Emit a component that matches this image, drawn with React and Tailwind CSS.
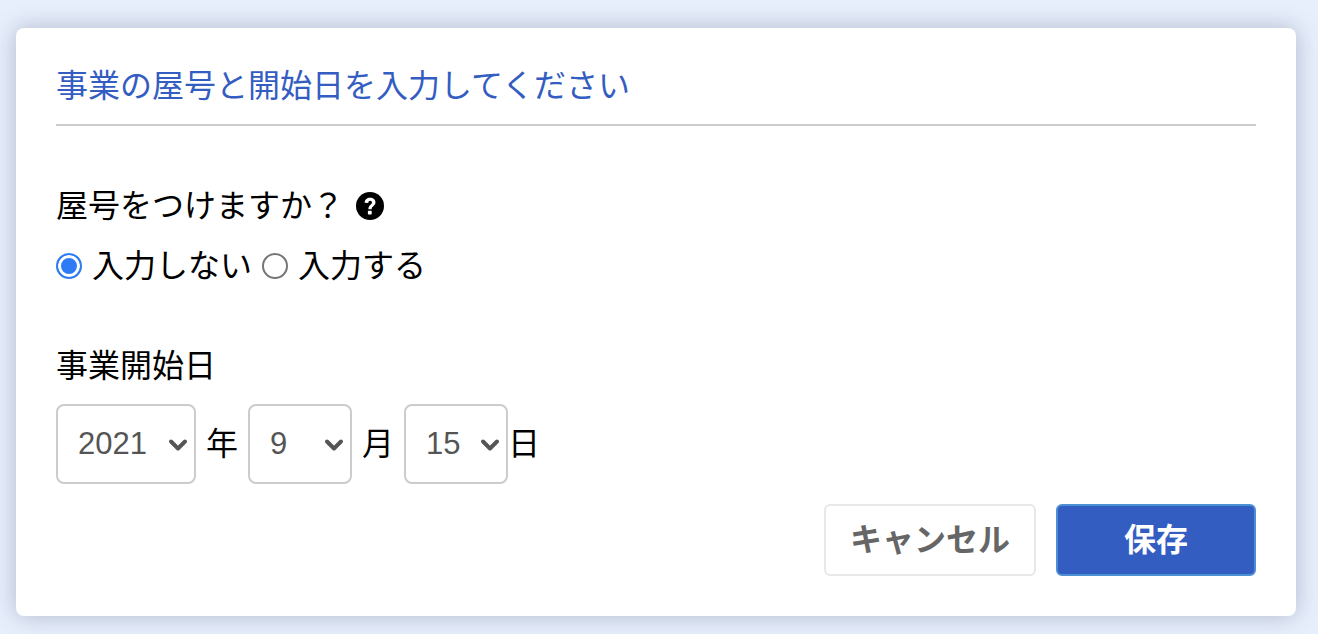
import React from "react";
import { ChevronDown } from "lucide-react";

const fontStack = "font-['Liberation_Sans','Noto_Sans_CJK_JP',sans-serif]";

function DateSelect({ value, options, width, padding }) {
  return (
    <div className={`relative ${width}`}>
      <select
        defaultValue={value}
        className={`appearance-none w-full h-[80px] bg-white border-2 border-[#cccccc] rounded-[8px] text-[31px] text-[#555555] outline-none ${padding} ${fontStack}`}
      >
        {options.map((option) => (
          <option key={option} value={option}>{option}</option>
        ))}
      </select>
      <ChevronDown
        size={28}
        strokeWidth={3.4}
        className="absolute right-[4px] top-[27px] text-[#555555] pointer-events-none"
      />
    </div>
  );
}

function Radio({ label, checked }) {
  return (
    <label className="flex items-center gap-[10px]">
      <input
        type="radio"
        name="yago"
        defaultChecked={checked}
        className="appearance-none w-[26px] h-[26px] rounded-full border-2 border-[#767676] bg-white checked:border-[#2f7bf5] checked:bg-[#2f7bf5] checked:shadow-[inset_0_0_0_3px_#ffffff]"
      />
      <span>{label}</span>
    </label>
  );
}

export default function App() {
  return (
    <div className={`w-full h-[634px] overflow-hidden bg-[#e8effc] pl-[16px] pr-[22px] pt-[28px] ${fontStack}`}>
      {/* card */}
      <div className="h-[588px] bg-white rounded-[8px] shadow-[0_0_24px_rgba(30,50,90,0.28)] px-[40px] text-[32px] text-black">
        <div className="h-[98px] pt-[38px] border-b-2 border-[#cccccc] text-[#345dc1] leading-[40px] text-[32px]">
          事業の屋号と開始日を入力してください
        </div>

        <div className="mt-[60px] flex items-center leading-[40px]">
          <span>屋号をつけますか？</span>
          <svg viewBox="0 0 28 28" className="w-[28px] h-[28px] ml-[12px]">
            <circle cx="14" cy="14" r="14" fill="#000000" />
            <path d="M8.6 10.8c0-3 2.4-5 5.5-5s5.4 1.8 5.4 4.5c0 3.7-3.9 3.9-3.9 7h-3.2c0-4.4 3.6-4.6 3.6-6.8 0-1-.7-1.7-1.8-1.7-1.2 0-1.9.9-1.9 2.2z" fill="#ffffff" />
            <rect x="11.9" y="18.8" width="3.8" height="3.6" rx="0.6" fill="#ffffff" />
          </svg>
        </div>

        <div className="mt-[20px] flex items-center gap-[10px] leading-[40px]">
          <Radio label="入力しない" checked />
          <Radio label="入力する" />
        </div>

        <div className="mt-[60px] leading-[40px]">事業開始日</div>

        <div className="mt-[18px] flex items-center">
          <DateSelect value="2021" options={["2020", "2021", "2022"]} width="w-[140px]" padding="pl-[20px]" />
          <span className="mx-[10px]">年</span>
          <DateSelect value="9" options={["8", "9", "10"]} width="w-[104px]" padding="pl-[20px]" />
          <span className="mx-[10px]">月</span>
          <DateSelect value="15" options={["14", "15", "16"]} width="w-[104px]" padding="pl-[20px]" />
          <span>日</span>
        </div>

        <div className="mt-[20px] flex justify-end gap-[20px]">
          <button className="w-[212px] h-[72px] bg-white border-2 border-[#e8e8e8] rounded-[6px] text-[#666666] text-[32px] font-bold">
            キャンセル
          </button>
          <button className="w-[200px] h-[72px] bg-[#345dc1] border-2 border-[#4a90d2] rounded-[6px] text-white text-[32px] font-bold">
            保存
          </button>
        </div>
      </div>
    </div>
  );
}
